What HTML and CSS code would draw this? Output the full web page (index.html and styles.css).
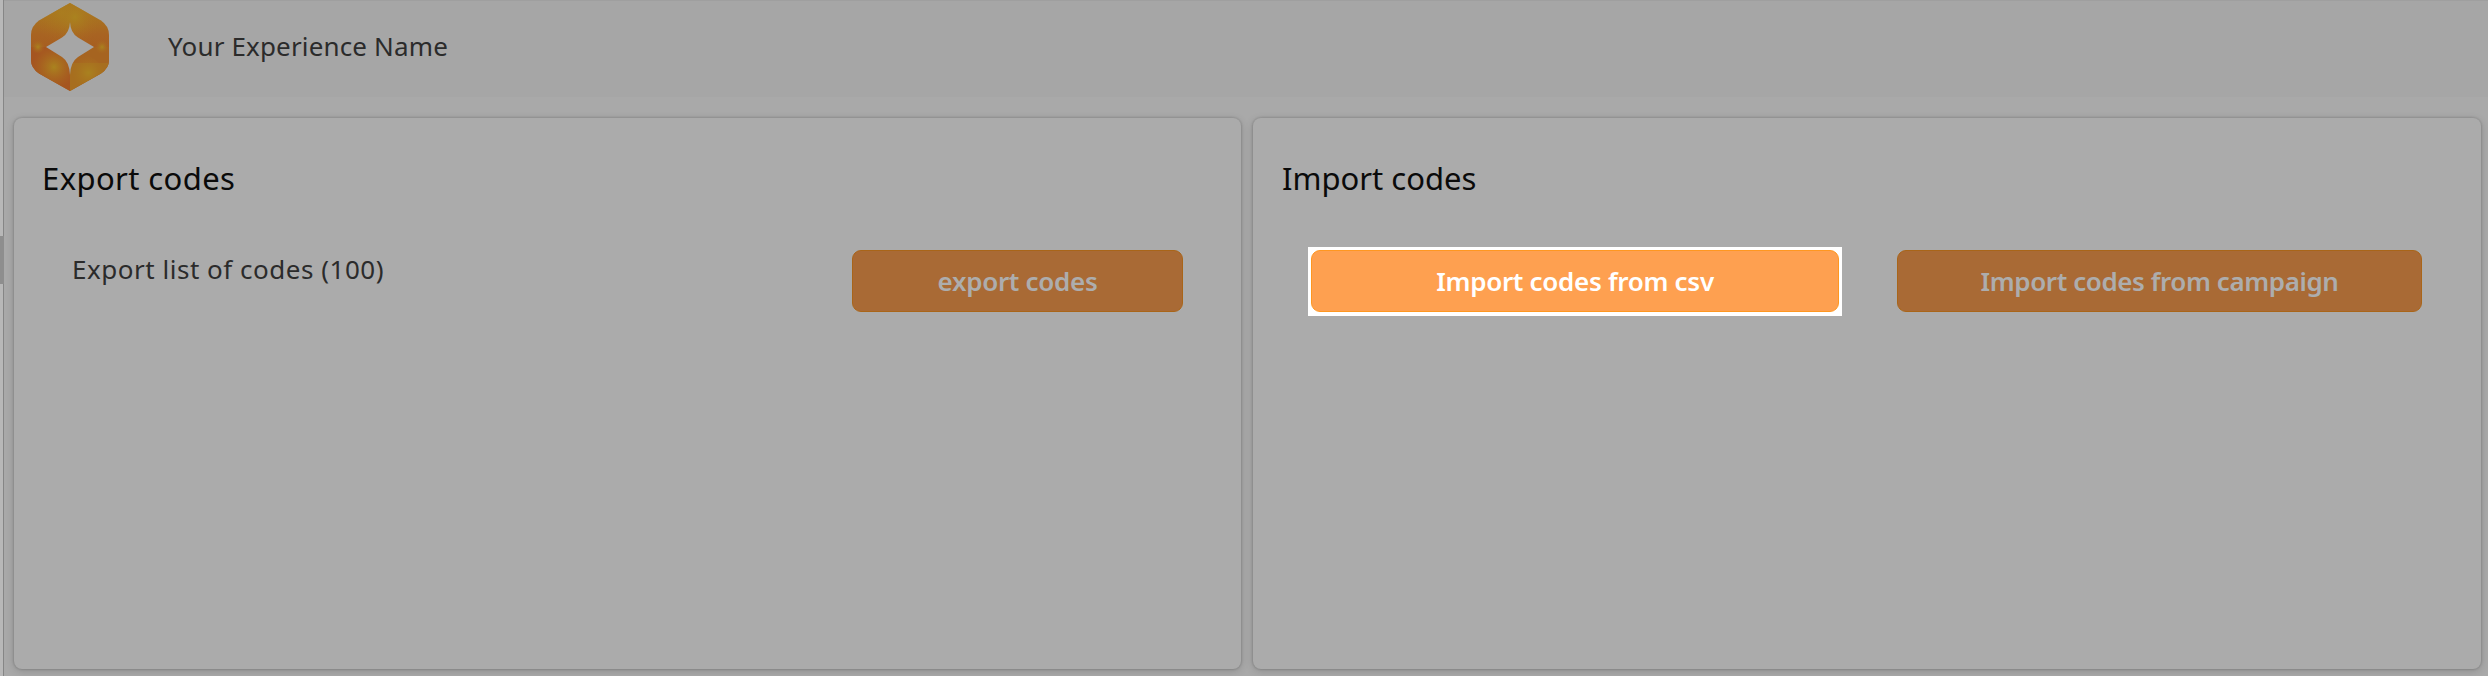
FILE: index.html
```html
<!DOCTYPE html>
<html lang="en">
<head>
<meta charset="utf-8">
<title>Codes</title>
<link rel="stylesheet" href="styles.css">
</head>
<body>
<div class="app">
  <aside class="rail"><span class="rail-handle"></span></aside>
  <div class="main">
    <header class="topbar">
      <svg class="logo" viewBox="0 0 78 88">
        <defs>
          <linearGradient id="base" x1="0" y1="0" x2="0" y2="1"><stop offset="0" stop-color="#a9801f"/><stop offset=".35" stop-color="#a86422"/><stop offset=".65" stop-color="#a65920"/><stop offset="1" stop-color="#a76820"/></linearGradient>
          <radialGradient id="glow"><stop offset="0" stop-color="#aa831f"/><stop offset="1" stop-color="#aa6a20" stop-opacity="0"/></radialGradient>
          <clipPath id="hex"><path d="M39 0 70 17.500Q78 23 78 32V57Q78 65 70 70.500L39 88 8 70.500Q0 65 0 57V32Q0 23 8 17.500Z"/></clipPath>
        </defs>
        <g clip-path="url(#hex)">
          <rect width="78" height="88" fill="url(#base)"/>
          <path d="M0 44H39V88H0Z" fill="#a55520"/>
          <circle cx="31" cy="10" r="30" fill="url(#glow)"/>
          <circle cx="44" cy="14" r="27" fill="url(#glow)"/>
          <circle cx="23" cy="64" r="22" fill="url(#glow)"/>
          <path d="M39 44H78V88H39Z" fill="#a66420"/>
          <path d="M39 53A28 28 0 0 1 76 77L39 88Z" fill="url(#glow)"/>
          <path d="M39 60H78V88H39Z" fill="#aa801f" fill-opacity=".35"/>
          <circle cx="7" cy="44" r="7" fill="url(#glow)"/>
          <circle cx="71" cy="44" r="7" fill="url(#glow)"/>
        </g>
        <path d="M39 19Q39.500 30 47 34.500L63 44 47 54Q39.500 59 39 72 38.500 59 31 54L15 44 31 34.500Q38.500 30 39 19Z" fill="#a6a6a6"/>
      </svg>
      <span class="name">Your Experience Name</span>
    </header>
    <main class="cards">
      <section class="card">
        <h2 class="title title-export">Export codes</h2>
        <div class="row row-export">
          <span class="label">Export list of codes (100)</span>
          <button class="btn btn-export">export codes</button>
        </div>
      </section>
      <section class="card">
        <h2 class="title title-import">Import codes</h2>
        <div class="row row-import">
          <div class="spotlight"><button class="btn btn-csv">Import codes from csv</button></div>
          <button class="btn btn-campaign">Import codes from campaign</button>
        </div>
      </section>
    </main>
  </div>
</div>
</body>
</html>
```
FILE: styles.css
```css
* { box-sizing: border-box; }
body { margin: 0; background: #a9a9a9; font-family: "Noto Sans", sans-serif; overflow: hidden; }
.app { display: flex; height: 676px; }
.rail { width: 4px; padding-top: 236px; background: #b8b8b8; border-right: 1px solid #868686; }
.rail-handle { display: block; width: 4px; height: 48px; background: #8e8e8e; }
.main { flex: 1; display: flex; flex-direction: column; }
.topbar { height: 97px; display: flex; align-items: flex-start; padding: 3px 0 0 27px; background: #a6a6a6; border-top: 1px solid #9f9f9f; }
.logo { width: 78px; height: 88px; margin-top: -1px; }
.name { margin-left: 59px; margin-top: 23px; font-size: 26px; line-height: 38px; color: #2b2b2b; white-space: nowrap; letter-spacing: .15px; }
.cards { display: grid; grid-template-columns: 1227px 1228px; gap: 12px; padding: 21px 0 0 10px; }
.card { height: 551px; padding-top: 39px; border-radius: 8px; background: #ababab; box-shadow: 0 0 2px 1px rgba(0,0,0,.12), 0 2px 8px rgba(0,0,0,.16); }
.title { margin: 0 0 2px 28px; font-size: 31px; line-height: 42px; font-weight: 400; color: #0a0a0a; white-space: nowrap; }
.title-export { letter-spacing: .4px; }
.title-import { margin-left: 29px; }
.row { display: flex; align-items: flex-start; }
.row-export { justify-content: space-between; padding: 49px 58px 0 58px; }
.row-import { justify-content: space-between; padding: 46px 59px 0 55px; }
.label { font-size: 26px; line-height: 38px; color: #2b2b2b; white-space: nowrap; letter-spacing: .52px; }
.btn { height: 62px; padding: 0; border: 1px solid #a96519; border-radius: 9px; background: #a96a35; color: #adadad; font-family: inherit; font-weight: 600; font-size: 26px; line-height: 58px; white-space: nowrap; letter-spacing: -.3px; }
.btn-export { width: 331px; }
.spotlight { padding: 3px; width: 534px; height: 69px; background: #fff; }
.btn-csv { display: block; width: 528px; background: #fea050; border-color: #ff9720; color: #fff; }
.btn-campaign { width: 525px; margin-top: 3px; letter-spacing: -.42px; }
```
